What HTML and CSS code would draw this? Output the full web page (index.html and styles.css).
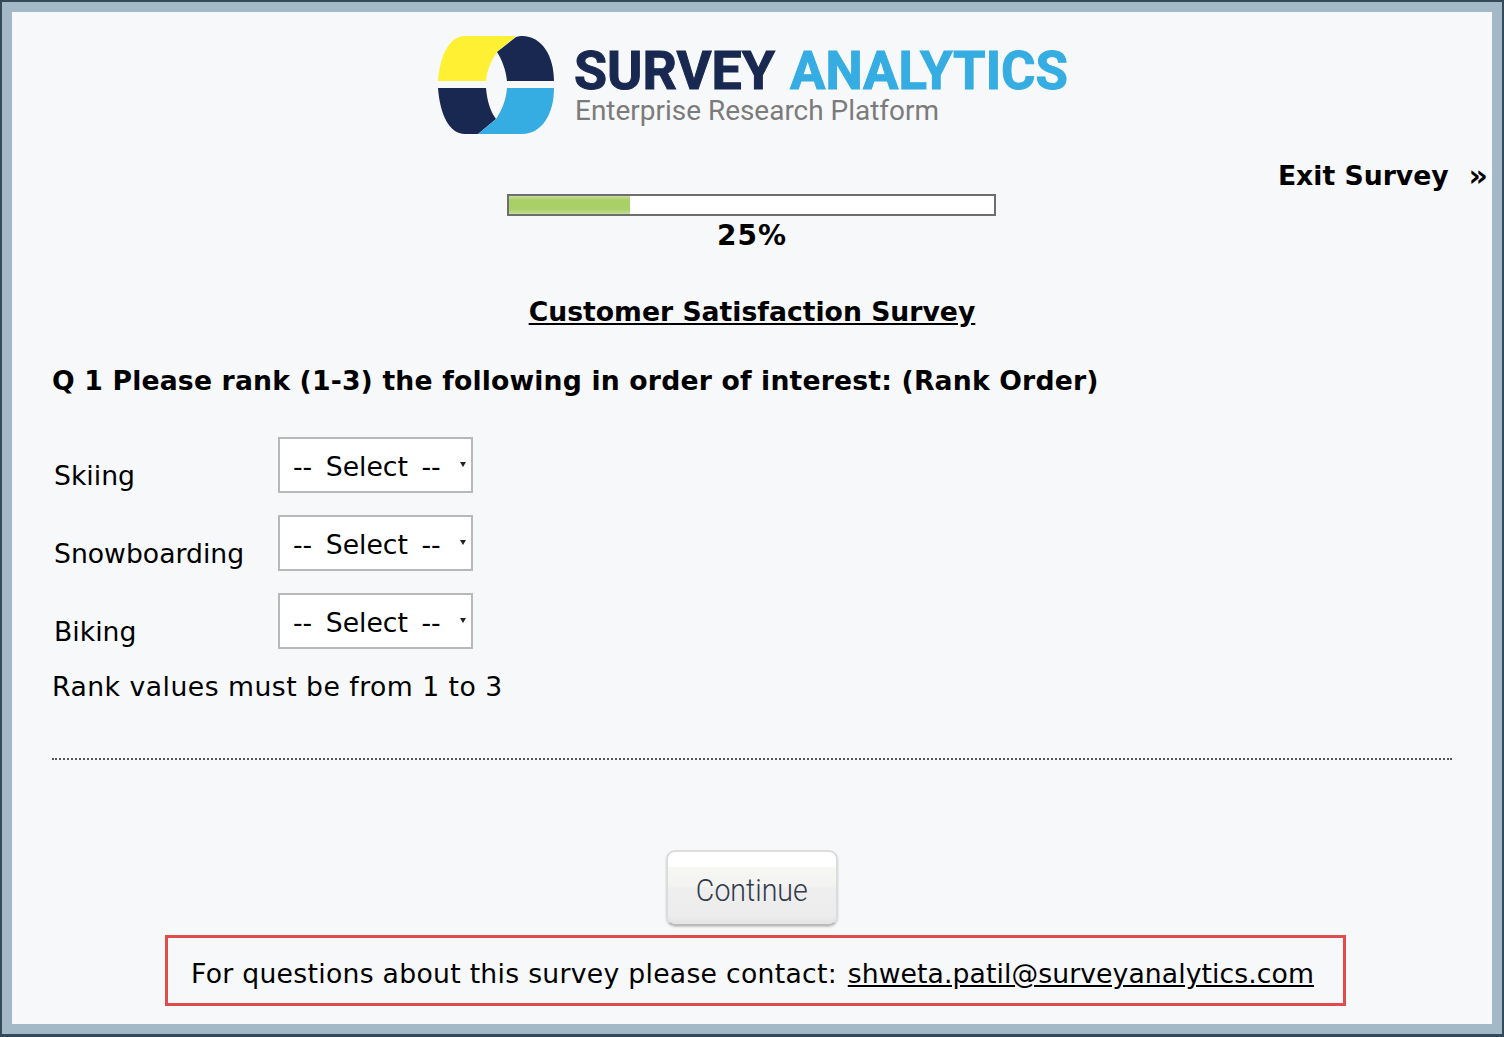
FILE: index.html
```html
<!DOCTYPE html>
<html lang="en">
<head>
  <meta charset="UTF-8">
  <title>Customer Satisfaction Survey | Survey Analytics</title>
  <meta name="viewport" content="width=device-width, initial-scale=1.0">
  <link rel="stylesheet" href="styles.css">
</head>
<body>

<div class="frame">
  <div class="page">

    <div class="logo">
      <svg width="640" height="104" viewBox="0 0 640 104" role="img" aria-label="Survey Analytics">
        <path fill="#fff033" d="M2 49C4 24 13 4 29 4H80L61 20C55 29 51 38 50 49Z"/>
        <path fill="#182850" d="M61 20L80 5C83 4 84 4 86 4C106 4 118 24 118 49H71C70 38 66 28 61 20Z"/>
        <path fill="#182850" d="M2 56H50C51 68 54 79 60 87L42 102H29C13 102 4 82 2 56Z"/>
        <path fill="#35ade2" d="M71 56H118C118 82 106 102 86 102H42L60 87C66 78 70 68 71 56Z"/>
        <text class="logo-main logo-navy" x="138" y="57" textLength="201" lengthAdjust="spacingAndGlyphs">SURVEY</text>
        <text class="logo-main logo-blue" x="354" y="57" textLength="278" lengthAdjust="spacingAndGlyphs">ANALYTICS</text>
        <text class="logo-sub" x="139" y="88" textLength="364" lengthAdjust="spacingAndGlyphs">Enterprise Research Platform</text>
      </svg>
    </div>

    <div class="exit-row">
      <a class="exit-link" href="#"><span>Exit Survey</span><span class="exit-arrows">»</span></a>
    </div>

    <div class="progress">
      <div class="progress-bar"><div class="progress-fill" style="width: 25%"></div></div>
      <div class="progress-label">25%</div>
    </div>

    <h1 class="survey-title">Customer Satisfaction Survey</h1>

    <form class="question">
      <h2 class="question-text">Q 1 Please rank (1-3) the following in order of interest: (Rank Order)</h2>

      <div class="rank-row">
        <label class="rank-label" for="rank1">Skiing</label>
        <div class="select-wrap">
          <select id="rank1"><option>-- Select --</option><option>1</option><option>2</option><option>3</option></select>
        </div>
      </div>
      <div class="rank-row">
        <label class="rank-label" for="rank2">Snowboarding</label>
        <div class="select-wrap">
          <select id="rank2"><option>-- Select --</option><option>1</option><option>2</option><option>3</option></select>
        </div>
      </div>
      <div class="rank-row">
        <label class="rank-label" for="rank3">Biking</label>
        <div class="select-wrap">
          <select id="rank3"><option>-- Select --</option><option>1</option><option>2</option><option>3</option></select>
        </div>
      </div>

      <p class="rank-note">Rank values must be from 1 to 3</p>

      <hr class="divider">

      <div class="actions">
        <button type="button" class="continue-btn"><span>Continue</span></button>
      </div>
    </form>

    <div class="contact">
      For questions about this survey please contact: <a href="#">shweta.patil@surveyanalytics.com</a>
    </div>

  </div>
</div>

</body>
</html>
```

FILE: styles.css
```css
* {
  margin: 0;
  padding: 0;
  box-sizing: border-box;
}

body {
  font-family: "DejaVu Sans", Verdana, sans-serif;
  font-size: 26.67px;
  line-height: 33px;
  color: #000;
  background: #34495a;
}

.frame {
  height: 1037px;
  border: 2px solid #34495a;
  border-bottom-width: 3px;
  background: #a3b9c7;
  padding: 10px;
}

.page {
  height: 1012px;
  background: #f7f8fa;
  padding: 0 40px;
}

/* logo */
.logo {
  display: flex;
  justify-content: center;
  height: 147px;
  padding-top: 20px;
  padding-left: 8px;
}

.logo-main {
  font-family: Roboto, sans-serif;
  font-weight: 700;
  font-size: 54px;
  stroke-width: 1px;
}

.logo-navy {
  fill: #182850;
  stroke: #182850;
}

.logo-blue {
  fill: #35ade2;
  stroke: #35ade2;
}

.logo-sub {
  font-family: Roboto, sans-serif;
  font-size: 28px;
  fill: #7b7b7b;
}

/* exit */
.exit-row {
  display: flex;
  justify-content: flex-end;
  height: 35px;
  margin-right: -36px;
}

.exit-link {
  color: #000;
  font-weight: bold;
  text-decoration: none;
  display: flex;
  gap: 20px;
}

.exit-arrows {
  font-size: 30px;
}

/* progress */
.progress {
  display: flex;
  flex-direction: column;
  align-items: center;
}

.progress-bar {
  width: 489px;
  height: 22px;
  margin-left: -2px;
  border: 2px solid #6e6e6e;
  background: #fff;
}

.progress-fill {
  height: 100%;
  background: linear-gradient(#c6de9c, #b5d67c 12%, #a8d066 25%, #a8d066 72%, #b5d67c 85%, #c6de9c);
}

.progress-label {
  font-size: 28px;
  font-weight: bold;
  letter-spacing: 1px;
  margin-top: 3px;
}

.survey-title {
  font-size: 26.67px;
  font-weight: bold;
  text-align: center;
  text-decoration: underline;
  margin-top: 43px;
}

.question-text {
  font-size: 26.67px;
  font-weight: bold;
  letter-spacing: 0.17px;
  margin-top: 36px;
  margin-bottom: 40px;
}

/* rank rows */
.rank-row {
  display: flex;
  align-items: flex-start;
  height: 56px;
  margin-bottom: 22px;
}

.rank-label {
  width: 226px;
  padding-left: 2px;
  padding-top: 22px;
}

.select-wrap {
  position: relative;
  width: 195px;
  height: 56px;
}

.select-wrap::after {
  content: "";
  position: absolute;
  top: 25px;
  right: 7px;
  border-left: 3px solid transparent;
  border-right: 3px solid transparent;
  border-top: 5px solid #222;
}

.select-wrap select {
  appearance: none;
  width: 100%;
  height: 100%;
  border: 2px solid #b8b8b8;
  border-radius: 0;
  background: #fff;
  color: #000;
  font: inherit;
  word-spacing: 5px;
  padding: 2px 0 0 13px;
}

.rank-note {
  letter-spacing: 0.48px;
  margin-top: -1px;
}

.divider {
  border: none;
  border-top: 2px dotted #555;
  margin-top: 55px;
}

.actions {
  display: flex;
  justify-content: center;
  margin-top: 90px;
}

.continue-btn {
  width: 172px;
  height: 76px;
  margin-right: 1px;
  border: 2px solid #dcdcdc;
  border-bottom-color: #bbb;
  border-radius: 9px;
  padding-top: 4px;
  background: linear-gradient(#fff 0, #fff 20%, #f6f6f3 22%, #f3f3f1 48%, #eee 50%, #ececec 88%, #e4e4e4 100%);
  box-shadow: 0 1px 2px rgba(0, 0, 0, 0.2);
  font-family: Roboto, sans-serif;
  font-size: 31px;
  font-weight: 300;
  color: #333a4a;
}

.continue-btn span {
  display: inline-block;
  transform: scaleX(0.92);
}

.contact {
  width: 1181px;
  height: 71px;
  margin: 9px 0 0 113px;
  border: 3px solid #e04c4c;
  padding: 19px 0 0 23px;
  letter-spacing: 0.28px;
  white-space: nowrap;
}

.contact a {
  color: #000;
  letter-spacing: 0.08px;
  margin-left: 2px;
}
```
